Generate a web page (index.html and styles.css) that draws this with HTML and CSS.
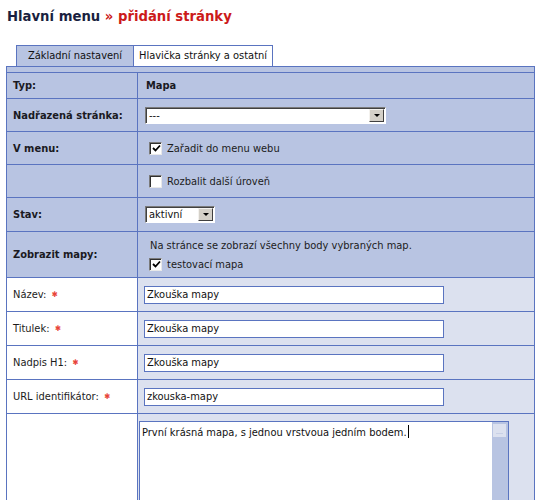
FILE: index.html
```html
<!DOCTYPE html>
<html lang="cs">
<head>
<meta charset="utf-8">
<title>Hlavní menu » přidání stránky</title>
<link rel="stylesheet" href="styles.css">
</head>
<body>
<div class="page">
  <h1 class="title">Hlavní menu <span class="sub">» přidání stránky</span></h1>

  <div class="tabs">
    <div class="tab active">Základní nastavení</div>
    <div class="tab">Hlavička stránky a ostatní</div>
  </div>

  <div class="panel">
    <table class="form">
      <tr class="r-typ dark">
        <td class="lbl"><b>Typ:</b></td>
        <td class="val"><b>Mapa</b></td>
      </tr>
      <tr class="r-32 dark">
        <td class="lbl"><b>Nadřazená stránka:</b></td>
        <td class="val">
          <div class="select wide"><span class="sel-text">---</span><span class="sel-btn"><span class="tri"></span></span></div>
        </td>
      </tr>
      <tr class="r-32 dark">
        <td class="lbl"><b>V menu:</b></td>
        <td class="val chk-cell">
          <label class="chk"><span class="box checked"><svg viewBox="0 0 9 9" width="9" height="9"><path d="M1 4 L3.5 6.5 L8 1.5" fill="none" stroke="#000" stroke-width="1.8"/></svg></span>Zařadit do menu webu</label>
        </td>
      </tr>
      <tr class="r-32 dark">
        <td class="lbl"></td>
        <td class="val chk-cell">
          <label class="chk"><span class="box"></span>Rozbalit další úroveň</label>
        </td>
      </tr>
      <tr class="r-33 dark">
        <td class="lbl"><b>Stav:</b></td>
        <td class="val">
          <div class="select narrow"><span class="sel-text">aktivní</span><span class="sel-btn"><span class="tri"></span></span></div>
        </td>
      </tr>
      <tr class="r-45 dark">
        <td class="lbl"><b>Zobrazit mapy:</b></td>
        <td class="val maps">
          <div class="note">Na stránce se zobrazí všechny body vybraných map.</div>
          <label class="chk"><span class="box checked"><svg viewBox="0 0 9 9" width="9" height="9"><path d="M1 4 L3.5 6.5 L8 1.5" fill="none" stroke="#000" stroke-width="1.8"/></svg></span>testovací mapa</label>
        </td>
      </tr>
      <tr class="r-33 light">
        <td class="lbl">Název: <span class="req">✱</span></td>
        <td class="val"><div class="input">Zkouška mapy</div></td>
      </tr>
      <tr class="r-33 light">
        <td class="lbl">Titulek: <span class="req">✱</span></td>
        <td class="val"><div class="input">Zkouška mapy</div></td>
      </tr>
      <tr class="r-33 light">
        <td class="lbl">Nadpis H1: <span class="req">✱</span></td>
        <td class="val"><div class="input">Zkouška mapy</div></td>
      </tr>
      <tr class="r-33 light">
        <td class="lbl">URL identifikátor: <span class="req">✱</span></td>
        <td class="val"><div class="input">zkouska-mapy</div></td>
      </tr>
      <tr class="r-area light">
        <td class="lbl"></td>
        <td class="val area-cell">
          <div class="textarea">
            <div class="ta-text">První krásná mapa, s jednou vrstvoua jedním bodem.<span class="caret"></span></div>
            <div class="ta-scroll"><div class="ta-btn"></div></div>
          </div>
        </td>
      </tr>
    </table>
  </div>
</div>
</body>
</html>
```

FILE: styles.css
```css
html, body {
  margin: 0;
  padding: 0;
  overflow: hidden;
  background: #ffffff;
}

body {
  font-family: "DejaVu Sans Condensed", "DejaVu Sans", sans-serif;
  font-size: 11px;
  color: #1c1c1c;
}

.page {
  padding: 0 6px;
}

.title {
  margin: 0;
  padding: 6px 0 0 1px;
  height: 45px;
  box-sizing: border-box;
  font-size: 14.7px;
  font-weight: bold;
  color: #1a1f40;
  line-height: 20px;
  white-space: nowrap;
}

.title .sub {
  color: #cc1a1a;
}

.tabs {
  display: flex;
  padding-left: 10px;
  height: 21px;
}

.tab {
  box-sizing: border-box;
  height: 21px;
  border: 1px solid #5a74c0;
  border-bottom: none;
  background: #ffffff;
  line-height: 20px;
  font-size: 11px;
  color: #111;
  white-space: nowrap;
}

.tab.active {
  background: #b8c4e2;
  border-right: none;
  width: 117px;
  text-align: center;
}

.tab + .tab {
  padding: 0 5px;
  min-width: 138px;
}

.panel {
  border: 1px solid #5a74c0;
  border-bottom: none;
  background: #b8c4e2;
  padding-top: 5px;
  width: 529px;
  box-sizing: border-box;
}

.form {
  width: 100%;
  border-collapse: collapse;
  border-spacing: 0;
}

.form td {
  border-top: 1px solid #5a74c0;
  padding: 0 6px;
  vertical-align: middle;
  line-height: 15px;
}

.form .lbl {
  width: 118px;
  border-right: 1px solid #5a74c0;
  white-space: nowrap;
}

.form .val {
  padding-left: 6px;
}

.form b {
  font-weight: bold;
  color: #1a1a22;
}

.r-typ td { height: 25px; }
.r-typ .val { padding-left: 8px; }
.r-32 td { height: 32px; }
.r-33 td { height: 33px; }
.r-45 td { height: 45px; }
.r-area td { height: 100px; vertical-align: top; }

.dark td { background: #b8c4e2; }
.light .lbl { background: #ffffff; }
.light .val { background: #dce1ef; }

.select {
  display: flex;
  align-items: center;
  box-sizing: border-box;
  height: 17px;
  background: #ffffff;
  border-top: 1px solid #7a7a7a;
  border-left: 1px solid #7a7a7a;
  border-right: 1px solid #ffffff;
  border-bottom: 1px solid #ffffff;
  box-shadow: inset 1px 1px 0 #404040;
  padding: 1px 1px 1px 3px;
}

.select.wide { width: 241px; margin-left: 1px; }
.select.narrow { width: 70px; margin-left: 1px; }

.sel-text {
  flex: 1;
  line-height: 13px;
  color: #111;
}

.sel-btn {
  width: 15px;
  height: 13px;
  box-sizing: border-box;
  background: #d4d0c8;
  border-top: 1px solid #f4f2ee;
  border-left: 1px solid #f4f2ee;
  border-right: 1px solid #404040;
  border-bottom: 1px solid #404040;
  display: flex;
  align-items: center;
  justify-content: center;
}

.tri {
  width: 0;
  height: 0;
  border-left: 3px solid transparent;
  border-right: 3px solid transparent;
  border-top: 3px solid #000;
}

.chk {
  display: flex;
  align-items: center;
  gap: 5px;
  padding-left: 5px;
  color: #1c1c1c;
}

.box {
  box-sizing: border-box;
  width: 13px;
  height: 13px;
  background: #ffffff;
  border-top: 1px solid #7a7a7a;
  border-left: 1px solid #7a7a7a;
  border-right: 1px solid #e8e8e8;
  border-bottom: 1px solid #e8e8e8;
  box-shadow: inset 1px 1px 0 #303030;
  display: flex;
  align-items: center;
  justify-content: center;
  padding: 1px 0 0 1px;
}

.maps .note {
  padding-left: 6px;
  margin-bottom: 4px;
}

.req {
  color: #e8453a;
  font-size: 8px;
  vertical-align: 1px;
  margin-left: 2px;
}

.input {
  box-sizing: border-box;
  width: 300px;
  height: 18px;
  background: #ffffff;
  border: 1px solid #5a74c0;
  padding: 0 2px;
  line-height: 16px;
  color: #111;
}

.form .area-cell {
  padding-top: 7px;
  padding-left: 1px;
}

.textarea {
  display: flex;
  box-sizing: border-box;
  width: 370px;
  height: 90px;
  background: #ffffff;
  border: 1px solid #5a74c0;
}

.ta-text {
  flex: 1;
  padding: 3px 2px;
  line-height: 15px;
  color: #111;
}

.caret {
  display: inline-block;
  width: 1px;
  height: 13px;
  background: #000;
  vertical-align: -2px;
  margin-left: 1px;
}

.ta-scroll {
  width: 16px;
  background: #b8c4e2;
  padding-top: 1px;
}

.ta-btn {
  box-sizing: border-box;
  width: 15px;
  height: 15px;
  background: #dce1ef;
  border: 1px solid #b8c4e2;
  position: relative;
}

.ta-btn::after {
  content: "";
  position: absolute;
  left: 3px;
  right: 3px;
  bottom: 3px;
  height: 1px;
  background: #c8d0e6;
}
```
